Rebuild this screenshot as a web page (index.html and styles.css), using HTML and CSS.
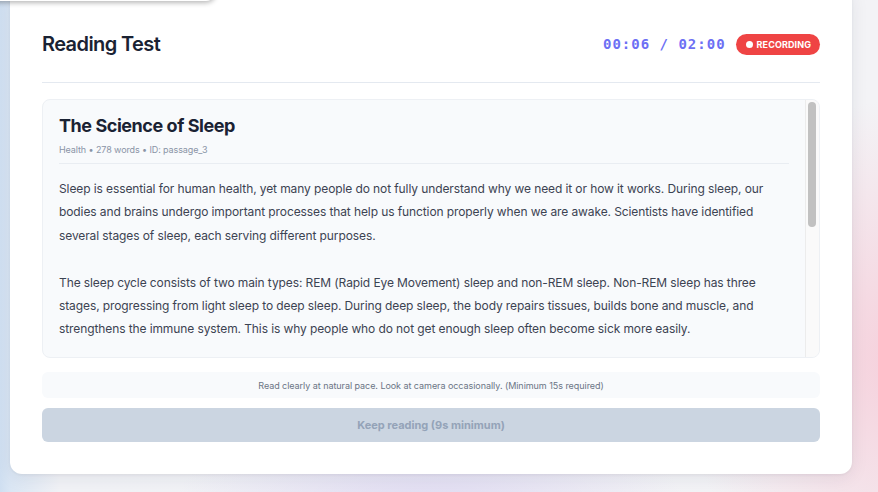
FILE: index.html
```html
<!DOCTYPE html>
<html lang="en">
<head>
<meta charset="utf-8">
<title>Reading Test</title>
<link rel="stylesheet" href="styles.css">
</head>
<body>
<div class="page">
  <div class="topbar"></div>
  <main class="card">
    <header class="card-header">
      <h1 class="title">Reading Test</h1>
      <div class="status">
        <span class="timer">00:06 / 02:00</span>
        <span class="badge"><span class="dot"></span>RECORDING</span>
      </div>
    </header>
    <section class="passage">
      <div class="passage-body">
        <div class="passage-head">
          <h2 class="passage-title">The Science of Sleep</h2>
          <div class="passage-meta">Health • 278 words • ID: passage_3</div>
        </div>
        <p class="passage-text">Sleep is essential for human health, yet many people do not fully understand why we need it or how it works. During sleep, our bodies and brains undergo important processes that help us function properly when we are awake. Scientists have identified several stages of sleep, each serving different purposes.</p>
        <p class="passage-text">The sleep cycle consists of two main types: REM (Rapid Eye Movement) sleep and non-REM sleep. Non-REM sleep has three stages, progressing from light sleep to deep sleep. During deep sleep, the body repairs tissues, builds bone and muscle, and strengthens the immune system. This is why people who do not get enough sleep often become sick more easily.</p>
      </div>
      <div class="scroll-track"><div class="scroll-thumb"></div></div>
    </section>
    <div class="hint">Read clearly at natural pace. Look at camera occasionally. (Minimum 15s required)</div>
    <button class="next-btn" disabled>Keep reading (9s minimum)</button>
  </main>
</div>
</body>
</html>
```

FILE: styles.css
```css
* { box-sizing: border-box; }

html, body {
  margin: 0;
  height: 100%;
}

body {
  font-family: Inter, "Noto Sans", "Liberation Sans", sans-serif;
  color: #1e293b;
  background:
    radial-gradient(ellipse 260px 120px at 430px 520px, rgba(214, 206, 240, 0.7), rgba(214, 206, 240, 0) 100%),
    radial-gradient(ellipse 220px 260px at 900px 360px, rgba(246, 206, 218, 0.95), rgba(246, 206, 218, 0) 100%),
    linear-gradient(90deg, #cfdff1 0px, #dae6f4 10px, #f1f2f6 60px, #f3f3f6 100%);
  overflow: hidden;
}

.page {
  position: relative;
  display: flow-root;
  height: 100%;
}

.topbar {
  position: absolute;
  top: -58px;
  left: -20px;
  width: 236px;
  height: 59px;
  background: #ffffff;
  border-radius: 10px;
  box-shadow: 0 2px 5px rgba(0, 0, 0, 0.28);
  z-index: 2;
}

.card {
  margin: -12px 26px 0 10px;
  background: #ffffff;
  border-radius: 12px;
  padding: 42px 32px 32px;
  box-shadow: 0 4px 18px rgba(30, 41, 59, 0.08), 0 1px 3px rgba(30, 41, 59, 0.06);
}

.card-header {
  display: flex;
  align-items: center;
  justify-content: space-between;
  padding-bottom: 24px;
  border-bottom: 1px solid #e4e9f0;
}

.title {
  margin: 0;
  font-size: 20px;
  line-height: 28px;
  font-weight: 600;
  letter-spacing: -0.6px;
  color: #1a2233;
}

.status {
  display: flex;
  align-items: center;
  gap: 10px;
}

.timer {
  font-family: "DejaVu Sans Mono", "Liberation Mono", monospace;
  font-size: 14px;
  font-weight: 700;
  letter-spacing: 1px;
  color: #6d70f4;
}

.badge {
  display: inline-flex;
  align-items: center;
  gap: 4px;
  height: 21px;
  padding: 0 9px 0 10px;
  border-radius: 11px;
  background: #ef4444;
  color: #ffffff;
  font-size: 9px;
  font-weight: 700;
  letter-spacing: 0.1px;
}

.dot {
  width: 7px;
  height: 7px;
  border-radius: 50%;
  background: #ffffff;
}

.passage {
  margin-top: 16px;
  height: 259px;
  display: flex;
  overflow: hidden;
  background: #f8fafc;
  border: 1px solid #edf0f4;
  border-radius: 8px;
}

.passage-body {
  flex: 1;
  min-width: 0;
  overflow: hidden;
  padding: 14px 16px 16px 16px;
}

.scroll-track {
  width: 14px;
  flex: none;
  background: #fafafa;
  border-left: 1px solid #ececec;
  padding: 2px 3px 0 2px;
}

.scroll-thumb {
  height: 125px;
  border-radius: 4px;
  background: #c1c1c1;
}

.passage-head {
  padding-bottom: 6px;
  border-bottom: 1px solid #e9edf2;
  margin-bottom: 13px;
}

.passage-title {
  margin: 0;
  font-size: 18px;
  line-height: 24px;
  font-weight: 700;
  letter-spacing: -0.45px;
  color: #1a2233;
}

.passage-meta {
  margin-top: 5px;
  font-size: 9px;
  line-height: 14px;
  letter-spacing: -0.1px;
  color: #8a94a6;
}

.passage-text {
  margin: 0 0 23.4px;
  font-size: 12px;
  line-height: 23.4px;
  letter-spacing: -0.1px;
  color: #3c4352;
}

.passage-text:last-child {
  margin-bottom: 0;
}

.hint {
  margin-top: 14px;
  height: 26px;
  display: flex;
  align-items: center;
  justify-content: center;
  background: #f8fafc;
  border-radius: 6px;
  font-size: 9px;
  letter-spacing: -0.05px;
  color: #6b7585;
}

.next-btn {
  display: block;
  width: 100%;
  margin-top: 10px;
  height: 34px;
  border: none;
  border-radius: 6px;
  background: #cbd5e1;
  color: #94a3b8;
  font-family: Inter, "Noto Sans", "Liberation Sans", sans-serif;
  font-size: 11px;
  font-weight: 700;
}
```
